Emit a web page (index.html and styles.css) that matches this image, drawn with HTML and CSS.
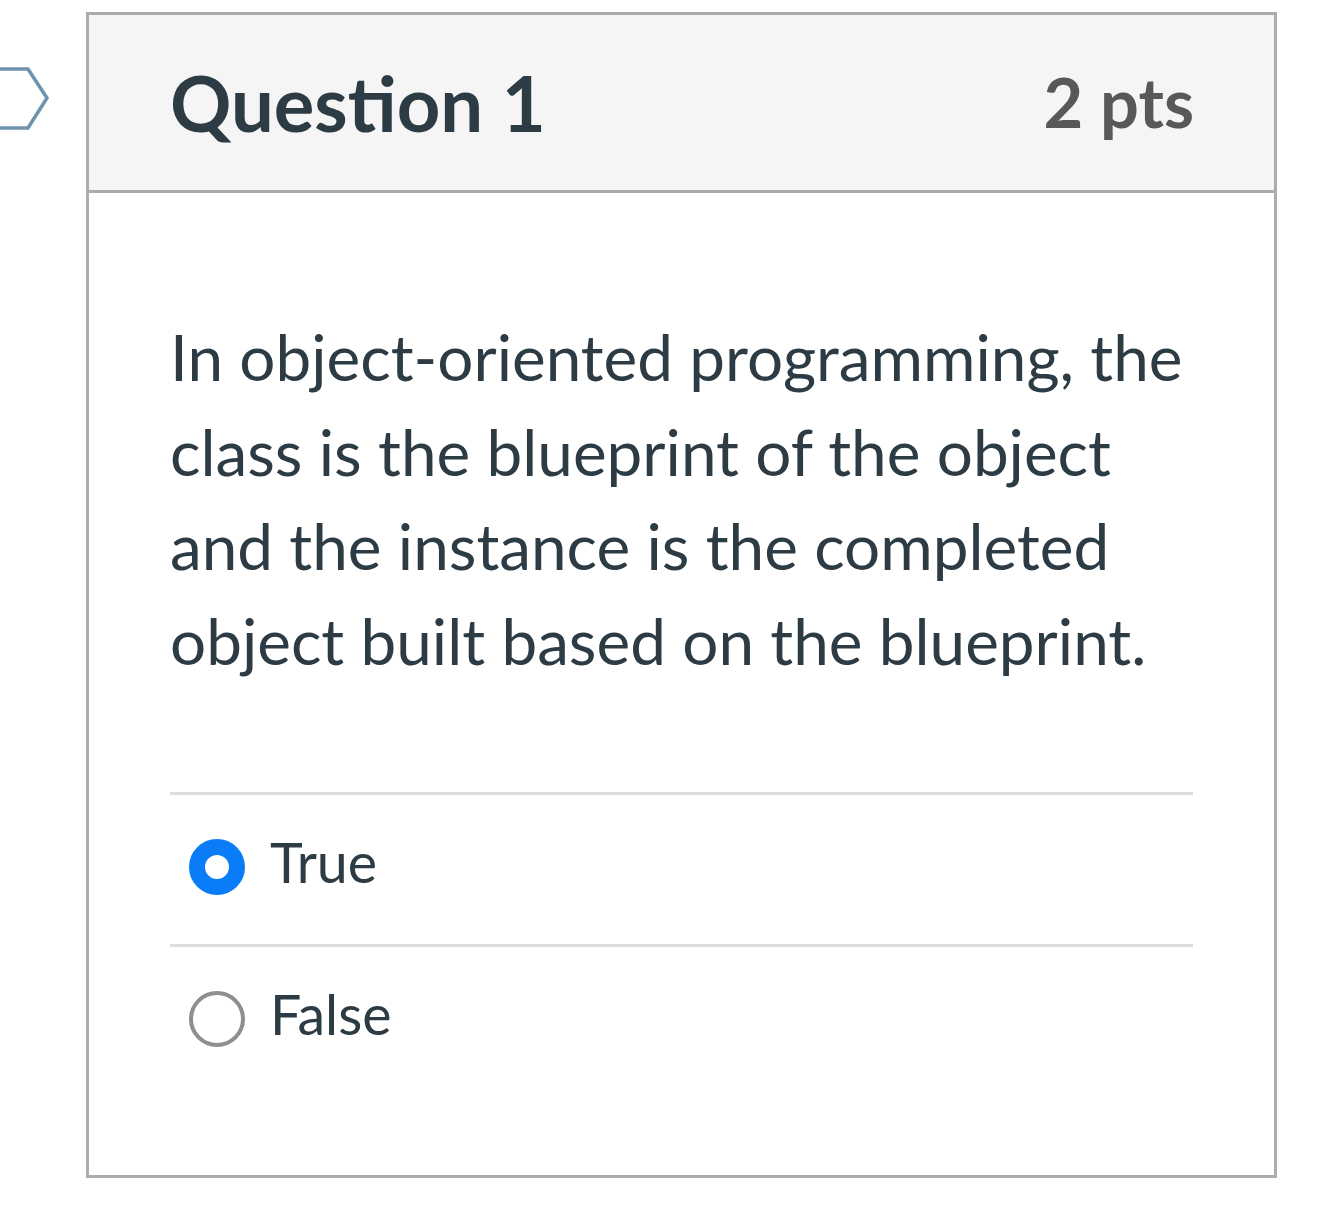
FILE: index.html
```html
<!DOCTYPE html>
<html lang="en">
<head>
<meta charset="utf-8">
<title>Question 1</title>
<link rel="stylesheet" href="styles.css">
</head>
<body>
<div class="page">
  <div class="gutter">
    <svg class="flag" width="56" height="66" viewBox="0 0 56 66" aria-hidden="true">
      <polyline points="-6,2 28,2 47,31 28,61 -6,61" fill="none" stroke="#6d93ae" stroke-width="3.5" stroke-linejoin="miter"/>
    </svg>
  </div>
  <div class="card">
    <div class="card-header">
      <h2 class="q-title">Question 1</h2>
      <span class="q-points">2 pts</span>
    </div>
    <div class="card-body">
      <p class="q-text">In object-oriented programming, the class is the blueprint of the object and the instance is the completed object built based on the blueprint.</p>
      <div class="answers">
        <label class="answer">
          <span class="radio radio-checked"></span>
          <span class="answer-label">True</span>
        </label>
        <label class="answer">
          <span class="radio"></span>
          <span class="answer-label">False</span>
        </label>
      </div>
    </div>
  </div>
</div>
</body>
</html>
```

FILE: styles.css
```css
html, body {
  margin: 0;
  padding: 0;
  background: #ffffff;
}

body {
  font-family: Lato, "Open Sans", "Liberation Sans", sans-serif;
  color: #2d3b45;
}

.page {
  display: flex;
  align-items: flex-start;
  padding-top: 12px;
}

.gutter {
  width: 86px;
  flex: none;
}

.flag {
  display: block;
  margin-top: 55px;
}

.card {
  width: 1191px;
  box-sizing: border-box;
  border: 3px solid #acacac;
  background: #ffffff;
}

.card-header {
  height: 175px;
  box-sizing: content-box;
  background: #f5f5f5;
  border-bottom: 3px solid #acacac;
  display: flex;
  align-items: center;
  justify-content: space-between;
  padding: 0 80px 0 81px;
}

.q-title {
  margin: 0;
  font-size: 76px;
  font-weight: 700;
  line-height: 1;
  color: #2d3b45;
}

.q-points {
  font-size: 68.5px;
  font-weight: 700;
  line-height: 1;
  color: #585858;
}

.card-body {
  padding: 117px 81px 79px 81px;
}

.q-text {
  margin: 0;
  font-size: 63.8px;
  line-height: 94.5px;
  color: #2d3b45;
}

.answers {
  margin-top: 104px;
}

.answer {
  display: flex;
  align-items: center;
  border-top: 3px solid #dcdcdc;
  padding: 44px 0 49px 19px;
}

.radio {
  width: 56px;
  height: 56px;
  box-sizing: border-box;
  border-radius: 50%;
  border: 4px solid #8e8e8e;
  background: #ffffff;
  flex: none;
}

.radio-checked {
  border: 16px solid #0a7cf7;
}

.answer-label {
  margin-left: 25px;
  font-size: 55.5px;
  line-height: 56px;
  margin-top: -10px;
  color: #2d3b45;
}
```
